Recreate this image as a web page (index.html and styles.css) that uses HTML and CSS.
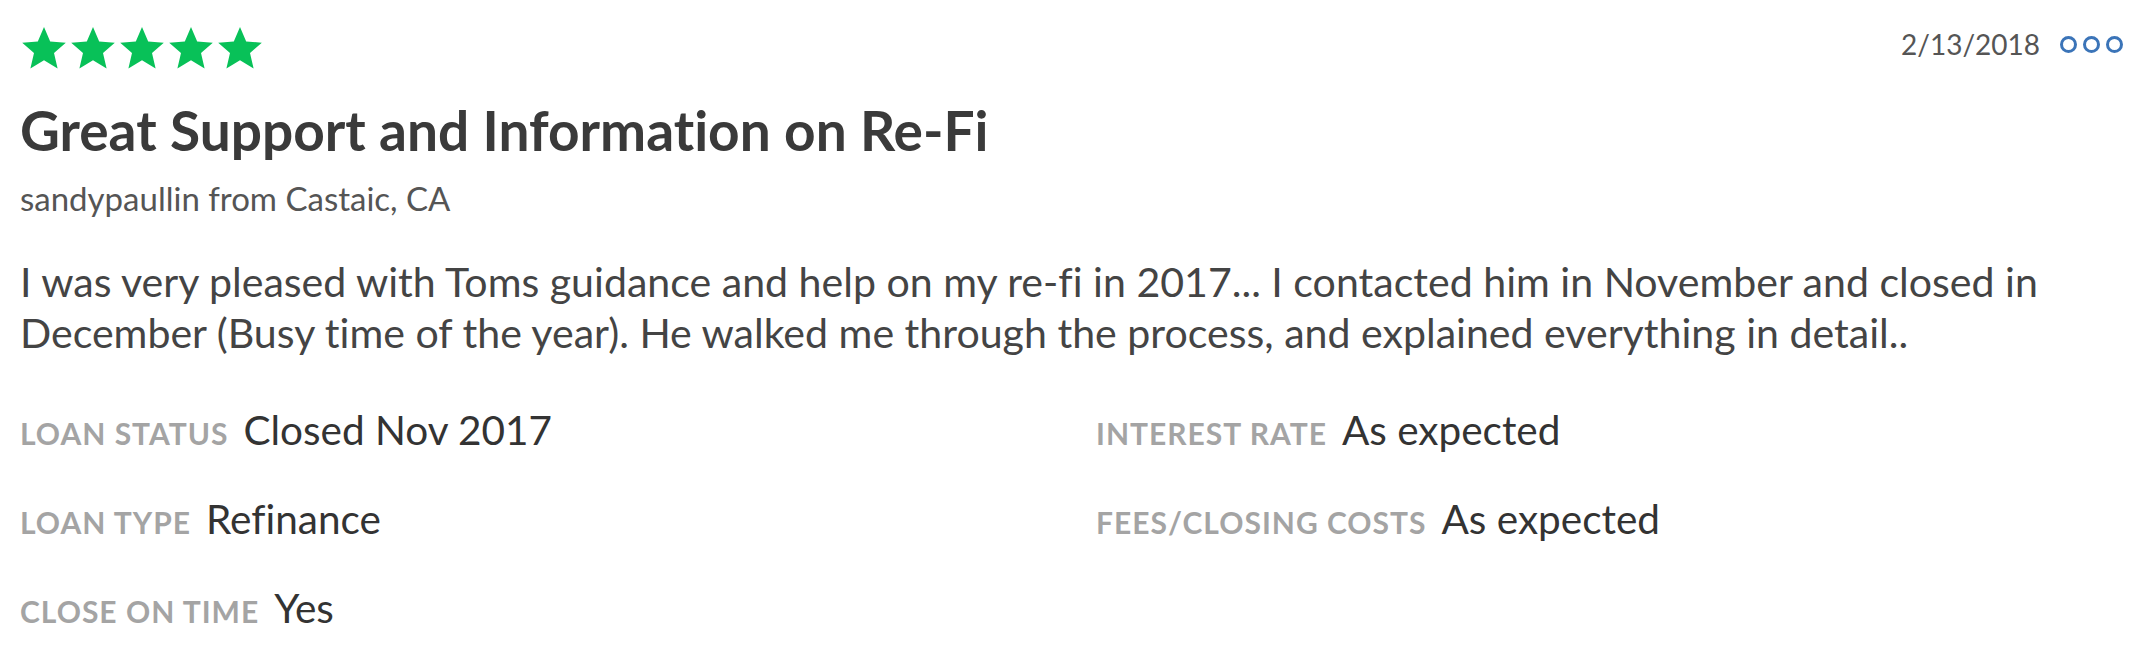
FILE: index.html
```html
<!DOCTYPE html>
<html>
<head>
<meta charset="utf-8">
<link rel="stylesheet" href="styles.css">
</head>
<body>
<div class="review">
  <div class="top">
    <div class="stars">
      <svg class="star" viewBox="0 0 24 24"><path d="M12 1.5l3.1 7.2 7.8.7-5.9 5.1 1.8 7.7L12 18.1l-6.8 4.1 1.8-7.7-5.9-5.1 7.8-.7z"/></svg>
      <svg class="star" viewBox="0 0 24 24"><path d="M12 1.5l3.1 7.2 7.8.7-5.9 5.1 1.8 7.7L12 18.1l-6.8 4.1 1.8-7.7-5.9-5.1 7.8-.7z"/></svg>
      <svg class="star" viewBox="0 0 24 24"><path d="M12 1.5l3.1 7.2 7.8.7-5.9 5.1 1.8 7.7L12 18.1l-6.8 4.1 1.8-7.7-5.9-5.1 7.8-.7z"/></svg>
      <svg class="star" viewBox="0 0 24 24"><path d="M12 1.5l3.1 7.2 7.8.7-5.9 5.1 1.8 7.7L12 18.1l-6.8 4.1 1.8-7.7-5.9-5.1 7.8-.7z"/></svg>
      <svg class="star" viewBox="0 0 24 24"><path d="M12 1.5l3.1 7.2 7.8.7-5.9 5.1 1.8 7.7L12 18.1l-6.8 4.1 1.8-7.7-5.9-5.1 7.8-.7z"/></svg>
    </div>
    <div class="meta">
      <span class="date">2/13/2018</span>
      <span class="dots"><i></i><i></i><i></i></span>
    </div>
  </div>
  <h1 class="title">Great Support and Information on Re-Fi</h1>
  <div class="author">sandypaullin from Castaic, CA</div>
  <p class="body">I was very pleased with Toms guidance and help on my re-fi in 2017... I contacted him in November and closed in December (Busy time of the year). He walked me through the process, and explained everything in detail..</p>
  <div class="details">
    <div class="item"><span class="label">LOAN STATUS</span><span class="value">Closed Nov 2017</span></div>
    <div class="item"><span class="label">INTEREST RATE</span><span class="value">As expected</span></div>
    <div class="item"><span class="label">LOAN TYPE</span><span class="value">Refinance</span></div>
    <div class="item"><span class="label">FEES/CLOSING COSTS</span><span class="value">As expected</span></div>
    <div class="item"><span class="label">CLOSE ON TIME</span><span class="value">Yes</span></div>
  </div>
</div>
</body>
</html>
```
FILE: styles.css
```css
html, body {
  margin: 0;
  padding: 0;
  background: #ffffff;
}
body {
  font-family: "Lato", "Liberation Sans", sans-serif;
  font-variant-ligatures: none;
  color: #404040;
}
.review {
  padding: 24px 11px 0 20px;
}
.top {
  display: flex;
  justify-content: space-between;
  align-items: center;
  height: 48px;
}
.stars {
  display: flex;
  gap: 1px;
}
.star {
  width: 48px;
  height: 48px;
  fill: #08c158;
}
.meta {
  display: flex;
  align-items: center;
  gap: 20px;
  margin-bottom: 8px;
}
.date {
  font-size: 28px;
  line-height: 36px;
  color: #555555;
}
.dots {
  display: flex;
  gap: 6px;
}
.dots i {
  display: block;
  width: 11px;
  height: 11px;
  border: 3px solid #3b74b8;
  border-radius: 50%;
}
.title {
  margin: 26px 0 0 0;
  font-size: 55px;
  font-weight: 700;
  color: #3a3a3a;
  line-height: 64px;
}
.author {
  margin-top: 16px;
  font-size: 33px;
  color: #555555;
  line-height: 40px;
}
.body {
  margin: 38px 0 0 0;
  font-size: 41.1px;
  line-height: 51px;
  color: #444444;
}
.details {
  display: grid;
  grid-template-columns: 1076px auto;
  row-gap: 36px;
  margin-top: 47px;
}
.item {
  display: flex;
  align-items: baseline;
  gap: 15px;
  line-height: 50px;
}
.label {
  font-size: 30px;
  font-weight: 700;
  letter-spacing: 1px;
  color: #a4a4a4;
}
.value {
  font-size: 40.5px;
  color: #333333;
}
```
